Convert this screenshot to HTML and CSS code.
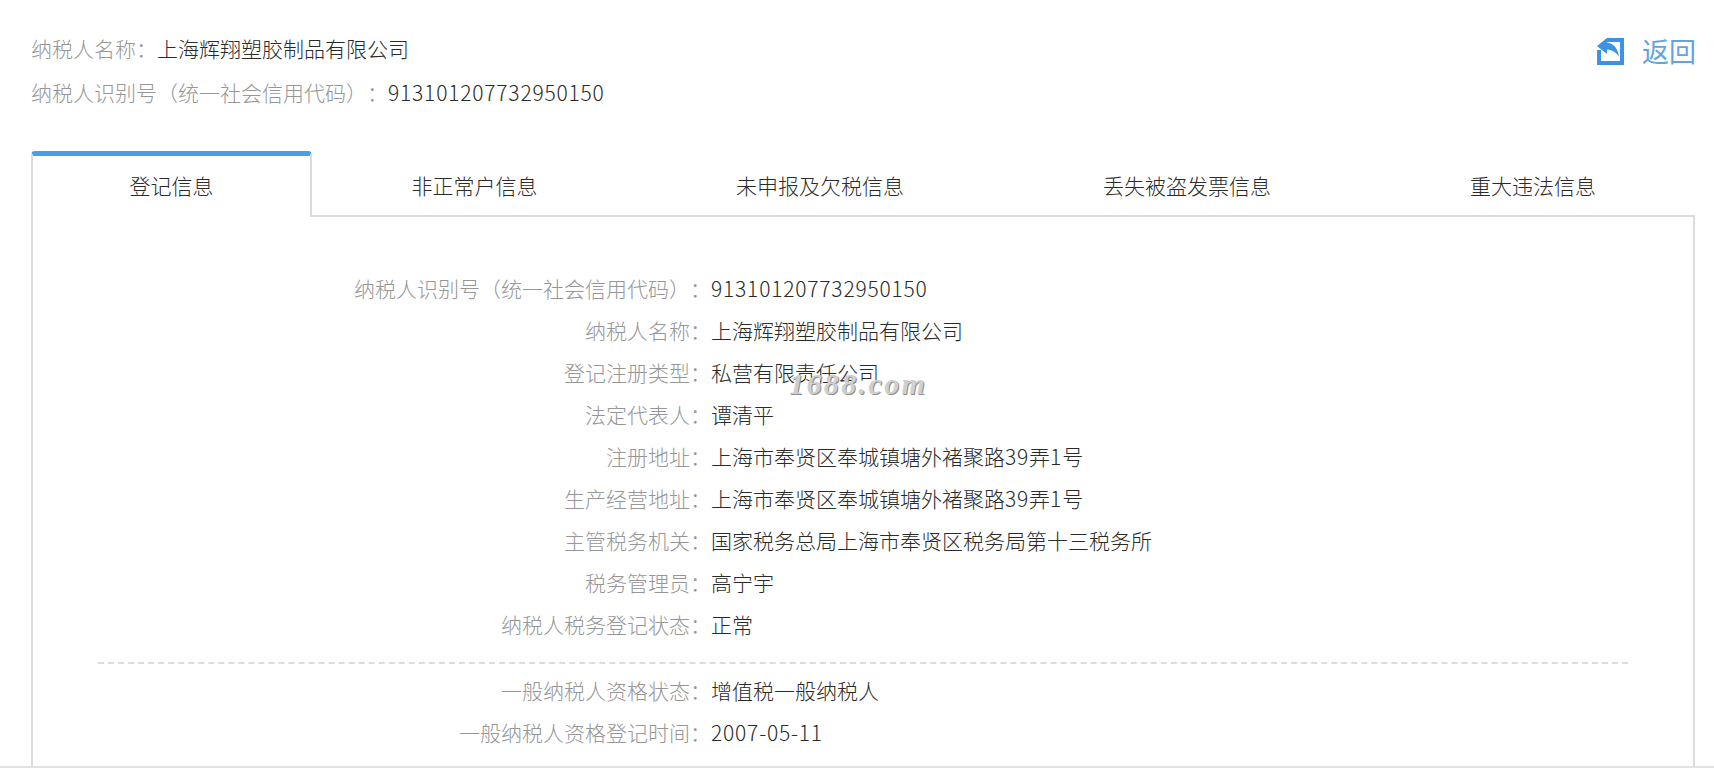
FILE: index.html
```html
<!DOCTYPE html>
<html lang="zh-CN">
<head>
  <meta charset="UTF-8" />
  <title>纳税人信息</title>
  <link rel="stylesheet" href="styles.css">
</head>
<body>
  <div class="page">
    <div class="top">
      <div class="taxpayer">
        <div class="taxpayer-row"><span class="label">纳税人名称：</span><span>上海辉翔塑胶制品有限公司</span></div>
        <div class="taxpayer-row"><span class="label">纳税人识别号（统一社会信用代码）：</span><span class="num">913101207732950150</span></div>
      </div>
      <a class="back">
        <svg class="back-icon" viewBox="0 0 27 27" width="27" height="27">
          <path fill="#3d93e3" d="M10 0H27V27H0V12H4V23H23V4H10Z"/>
          <path fill="#3d93e3" d="M0 8 10 0V4.500C16 5 21 10 22 19 19 14 15 12 10 11.500V16Z"/>
        </svg>
        <span>返回</span>
      </a>
    </div>

    <div class="tabs">
      <div class="tab active">登记信息</div>
      <div class="tab">非正常户信息</div>
      <div class="tab">未申报及欠税信息</div>
      <div class="tab">丢失被盗发票信息</div>
      <div class="tab">重大违法信息</div>
    </div>

    <div class="panel">
      <div class="info-row"><div class="info-label">纳税人识别号（统一社会信用代码）：</div><div class="num">913101207732950150</div></div>
      <div class="info-row"><div class="info-label">纳税人名称：</div><div>上海辉翔塑胶制品有限公司</div></div>
      <div class="info-row"><div class="info-label">登记注册类型：</div><div>私营有限责任公司</div></div>
      <div class="info-row"><div class="info-label">法定代表人：</div><div>谭清平</div></div>
      <div class="info-row"><div class="info-label">注册地址：</div><div>上海市奉贤区奉城镇塘外褚聚路<span class="num">39</span>弄<span class="num">1</span>号</div></div>
      <div class="info-row"><div class="info-label">生产经营地址：</div><div>上海市奉贤区奉城镇塘外褚聚路<span class="num">39</span>弄<span class="num">1</span>号</div></div>
      <div class="info-row"><div class="info-label">主管税务机关：</div><div>国家税务总局上海市奉贤区税务局第十三税务所</div></div>
      <div class="info-row"><div class="info-label">税务管理员：</div><div>高宁宇</div></div>
      <div class="info-row"><div class="info-label">纳税人税务登记状态：</div><div>正常</div></div>
      <div class="divider"></div>
      <div class="info-row"><div class="info-label">一般纳税人资格状态：</div><div>增值税一般纳税人</div></div>
      <div class="info-row"><div class="info-label">一般纳税人资格登记时间：</div><div class="num">2007-05-11</div></div>
      <div class="watermark">1688.com</div>
    </div>
  </div>
</body>
</html>
```

FILE: styles.css
```css
html, body {
  margin: 0;
  height: 100%;
  overflow: hidden;
}
body {
  font-family: "Noto Sans CJK SC", sans-serif;
  font-weight: 300;
  font-size: 21px;
  color: #2a2a2a;
  background-color: #fff;
  text-spacing-trim: space-all;
}
.page {
  height: 768px;
  box-sizing: border-box;
  border-bottom: 2px solid #e2e2e2;
  overflow: hidden;
}
.top {
  display: flex;
  justify-content: space-between;
  align-items: flex-start;
  height: 151px;
  padding: 26px 18px 0 31px;
  box-sizing: border-box;
}
.taxpayer-row {
  line-height: 44px;
  height: 44px;
}
.label {
  color: #969696;
}
.num {
  letter-spacing: 0.8px;
}
.back {
  display: flex;
  align-items: center;
  gap: 18px;
  margin-top: 11px;
  font-size: 27px;
  font-weight: 400;
  line-height: 28px;
  color: #62a4e0;
}
.back-icon {
  display: block;
}
.tabs {
  display: grid;
  grid-template-columns: 281px 325px 366px 368px 324px;
  margin-left: 31px;
  height: 66px;
}
.tab {
  text-align: center;
  line-height: 43px;
  padding-top: 13px;
  box-sizing: border-box;
  border-bottom: 2px solid #dcdcdc;
}
.tab.active {
  border-top: 5px solid #4c9ee3;
  border-left: 2px solid #dcdcdc;
  border-right: 2px solid #dcdcdc;
  border-bottom: none;
  border-radius: 4px 4px 0 0;
  padding-top: 8px;
}
.panel {
  position: relative;
  margin-left: 31px;
  width: 1664px;
  height: 551px;
  box-sizing: border-box;
  padding-top: 50px;
  border-left: 2px solid #dcdcdc;
  border-right: 2px solid #dcdcdc;
}
.info-row {
  display: flex;
  height: 42px;
  line-height: 42px;
}
.info-label {
  width: 678px;
  text-align: right;
  color: #969696;
}
.divider {
  margin: 17px 65px 5px 65px;
  border-top: 2px dashed #dcdcdc;
}
.watermark {
  position: absolute;
  left: 756px;
  top: 150px;
  font-family: "Liberation Serif", serif;
  font-style: italic;
  font-weight: 700;
  font-size: 30px;
  letter-spacing: 2.400px;
  color: #cfcfcf;
  text-shadow: 1px 1px 0 #8f8f8f;
}
```
